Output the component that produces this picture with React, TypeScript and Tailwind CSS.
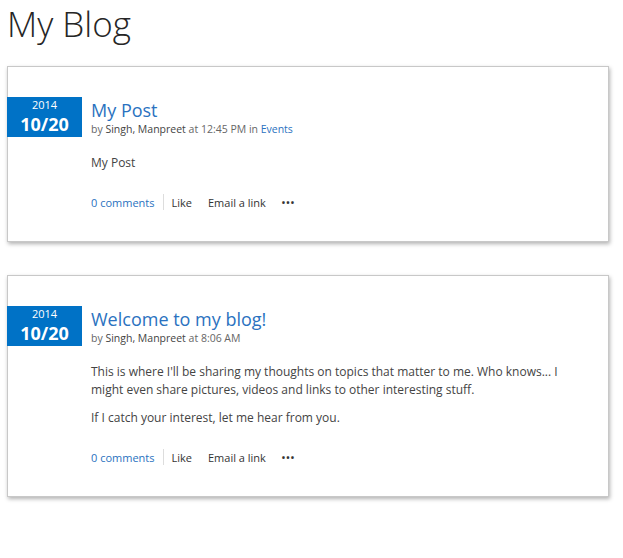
const posts = [
  {
    title: "My Post",
    time: "12:45 PM",
    category: "Events",
    body: ["My Post"],
  },
  {
    title: "Welcome to my blog!",
    time: "8:06 AM",
    category: "",
    body: [
      "This is where I'll be sharing my thoughts on topics that matter to me. Who knows... I might even share pictures, videos and links to other interesting stuff.",
      "If I catch your interest, let me hear from you.",
    ],
  },
];

type Post = (typeof posts)[number];

const PostCard = ({ post }: { post: Post }) => {
  return (
    <div className="ml-[7px] mr-[14px] border border-[#c8c8c8] bg-white shadow-[1px_2px_4px_rgba(0,0,0,0.3)] pt-[30px] pb-[31px]">
      <div className="flex">
        {/* Date block */}
        <div className="-ml-px w-[75px] h-[40px] shrink-0 bg-[#0072c6] text-white flex flex-col items-center">
          <span className="text-[11px] leading-[15px]">2014</span>
          <span className="text-[18px] leading-[24px] font-bold">10/20</span>
        </div>

        <div className="pl-[9px] pt-[1px]">
          <p className="text-[#2a72c0] text-[18px] leading-[24px]">{post.title}</p>
          <p className="text-[#666] text-[10.5px] leading-[15px]">
            by <span className="text-[#444]">Singh, Manpreet</span> at {post.time}
            {post.category && (
              <>
                {" "}in <span className="text-[#2a72c0]">{post.category}</span>
              </>
            )}
          </p>

          <div className="mt-[17px] w-[480px] text-[12px] leading-[18px] text-[#444] space-y-[10px]">
            {post.body.map((para, i) => (
              <p key={i}>{para}</p>
            ))}
          </div>

          <div className="mt-[22px] flex items-center text-[11px] leading-[15px] text-[#333]">
            <span className="text-[#2a72c0] pr-[8px]">0 comments</span>
            <span className="w-px h-[16px] bg-[#ddd]" />
            <span className="pl-[8px] pr-[16px]">Like</span>
            <span className="pr-[16px]">Email a link</span>
            <span className="font-bold tracking-[1px] text-[9px]">•••</span>
          </div>
        </div>
      </div>
    </div>
  );
};

const App = () => {
  return (
    <div className="w-[623px] h-[558px] bg-white font-['Open_Sans',sans-serif] overflow-hidden">
      <h1 className="pl-[7px] pt-[1px] text-[35px] leading-[46px] font-light text-[#262626]">My Blog</h1>
      <div className="mt-[19px] flex flex-col gap-[33px]">
        {posts.map((p) => (
          <PostCard key={p.title} post={p} />
        ))}
      </div>
    </div>
  );
};

export default App;
